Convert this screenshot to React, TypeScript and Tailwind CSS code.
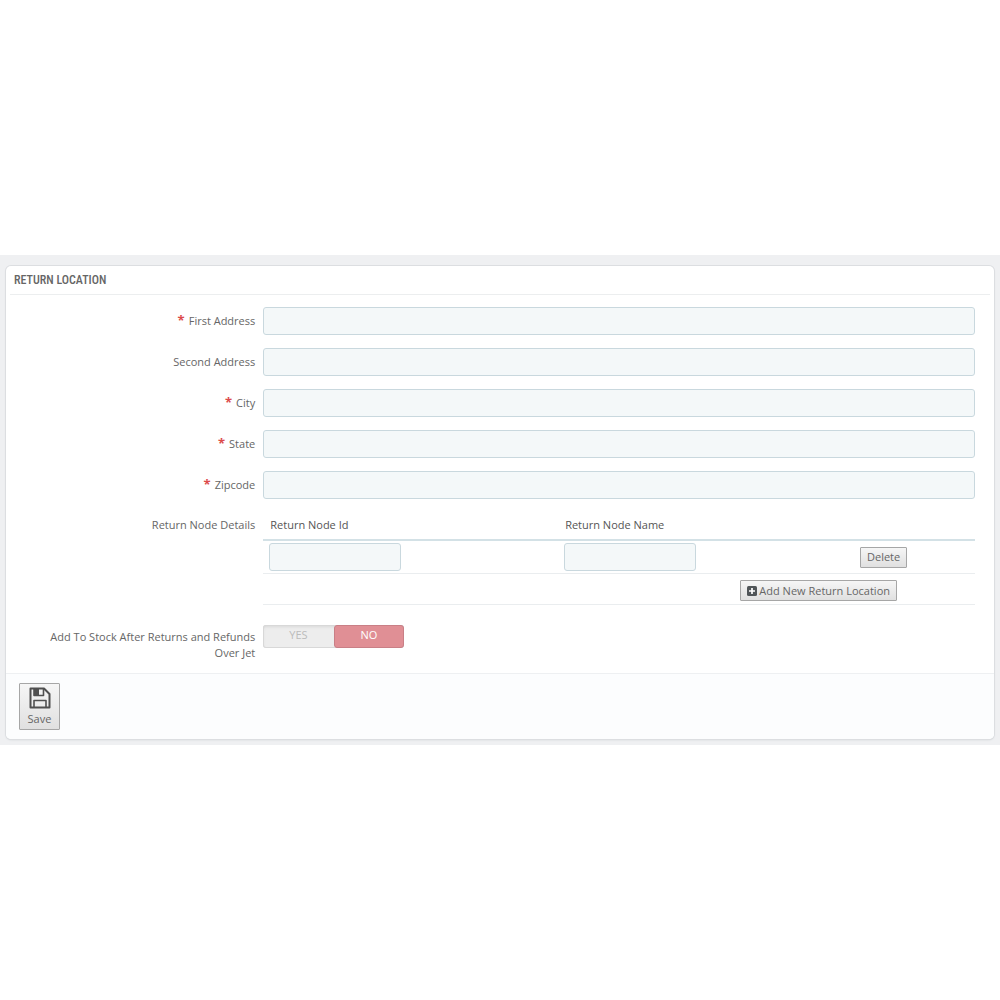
import { useState, type ReactNode } from 'react';

interface AddressField {
  id: string;
  label: string;
  required: boolean;
}

const ADDRESS_FIELDS: AddressField[] = [
  { id: 'first-address', label: 'First Address', required: true },
  { id: 'second-address', label: 'Second Address', required: false },
  { id: 'city', label: 'City', required: true },
  { id: 'state', label: 'State', required: true },
  { id: 'zipcode', label: 'Zipcode', required: true },
];

const inputClasses =
  'h-7 rounded-[3px] border border-[#c9d8de] bg-[#f4f8f9] px-2 text-xs text-[#555] outline-none focus:border-[#66afe9]';

const buttonClasses =
  'rounded-[1px] border border-[#a6a6a6] bg-linear-to-b from-[#f6f6f6] to-[#e0e0e0] text-[11px] text-[#666] hover:to-[#d4d4d4]';

const rowClasses = 'grid grid-cols-[1fr_3fr] gap-2';

const SaveIcon = () => (
  <svg viewBox="0 0 22 22" className="h-[22px] w-[22px]" fill="none" stroke="#4f4f4f" strokeWidth="2" strokeLinejoin="round">
    <path d="M1.5 1.5h13.5l5.5 5.5v13.5h-19z" />
    <path d="M5 1.5v7h9.5v-7" strokeWidth="1.6" />
    <path d="M5 2h5v6h-5z" fill="#4f4f4f" stroke="none" />
    <path d="M5 20.5v-7h12v7" strokeWidth="1.6" />
  </svg>
);

const PlusSquareIcon = () => (
  <svg viewBox="0 0 10 10" className="h-[10px] w-[10px]">
    <rect width="10" height="10" rx="1.5" fill="#505558" />
    <path d="M5 2v6M2 5h6" stroke="#fff" strokeWidth="1.7" />
  </svg>
);

const TextRow = ({ field }: { field: AddressField }) => (
  <div className={rowClasses}>
    <label htmlFor={field.id} className="pt-0.5 text-right leading-6">
      {field.required && <span className="mr-1 text-[13px] leading-none font-bold text-[#dc4b4b]">*</span>}
      {field.label}
    </label>
    <input id={field.id} type="text" required={field.required} className={`${inputClasses} w-full`} />
  </div>
);

const NodeTable = () => (
  <table className="w-full table-fixed border-collapse">
    <thead>
      <tr className="h-7 border-b-2 border-[#d3e1e6] text-left text-[#555]">
        <th className="px-[7px] pb-0.5 font-normal">Return Node Id</th>
        <th className="px-[7px] pb-0.5 font-normal">Return Node Name</th>
        <th className="w-[122px]" />
      </tr>
    </thead>
    <tbody>
      <tr className="h-[33px] border-b border-[#eaedef]">
        <td className="px-1.5">
          <input type="text" aria-label="Return Node Id" className={`${inputClasses} block w-[132px]`} />
        </td>
        <td className="px-1.5">
          <input type="text" aria-label="Return Node Name" className={`${inputClasses} block w-[132px]`} />
        </td>
        <td className="px-[7px]">
          <button type="button" className={`${buttonClasses} block h-[21px] px-1.5`}>
            Delete
          </button>
        </td>
      </tr>
      <tr className="h-[31px] border-b border-[#eaedef]">
        <td colSpan={3} className="pt-1 pr-[78px]">
          <button type="button" className={`${buttonClasses} ml-auto flex h-[21px] items-center gap-0.5 px-1.5`}>
            <PlusSquareIcon />
            Add New Return Location
          </button>
        </td>
      </tr>
    </tbody>
  </table>
);

interface SwitchOptionProps {
  checked: boolean;
  onSelect: () => void;
  activeClass: string;
  children: ReactNode;
}

const SwitchOption = ({ checked, onSelect, activeClass, children }: SwitchOptionProps) => (
  <label
    className={`flex flex-1 cursor-pointer items-center justify-center rounded-[3px] border pb-0.5 ${
      checked ? `${activeClass} text-white` : 'border-transparent text-[#bbb]'
    }`}
  >
    <input type="radio" name="add-to-stock" checked={checked} onChange={onSelect} className="sr-only" />
    {children}
  </label>
);

const StockSwitch = () => {
  const [enabled, setEnabled] = useState(false);

  return (
    <div
      role="radiogroup"
      aria-labelledby="stock-label"
      className="relative flex h-[23px] w-[141px] rounded-[3px] bg-[#ededed] shadow-[inset_0_0_0_1px_#d8d8d8,inset_0_2px_3px_#d8d8d8]"
    >
      <SwitchOption checked={enabled} onSelect={() => setEnabled(true)} activeClass="border-[#7fb98a] bg-[#92d097]">
        YES
      </SwitchOption>
      <SwitchOption checked={!enabled} onSelect={() => setEnabled(false)} activeClass="border-[#c97f86] bg-[#e08f95]">
        NO
      </SwitchOption>
    </div>
  );
};

export default function App() {
  return (
    <div className="flex min-h-screen flex-col justify-center bg-white font-['Open_Sans',sans-serif] text-[11px] text-[#666]">
      <main className="bg-[#eff0f2] px-1.5 pt-[11px] pb-1.5">
        <form
          onSubmit={(e) => e.preventDefault()}
          className="overflow-hidden rounded-[5px] bg-white shadow-[0_0_0_1px_#dcdee1,0_1px_2px_#cfd2d6]"
        >
          <h2 className="mx-1 border-b border-[#eceeef] px-1 font-['Ubuntu_Condensed','Roboto_Condensed','Liberation_Sans_Narrow',sans-serif] text-xs leading-7 font-medium text-[#666]">
            RETURN LOCATION
          </h2>

          <div className="flex flex-col gap-[13px] pt-3 pr-[19px] pb-3 pl-3">
            {ADDRESS_FIELDS.map((field) => (
              <TextRow key={field.id} field={field} />
            ))}

            <div className={rowClasses}>
              <span className="text-right leading-[26px]">Return Node Details</span>
              <NodeTable />
            </div>

            <div className={`${rowClasses} pt-[7px]`}>
              <span id="stock-label" className="pt-1 pl-4 text-right leading-4">
                Add To Stock After Returns and Refunds Over Jet
              </span>
              <StockSwitch />
            </div>
          </div>

          <div className="border-t border-[#eef0f2] bg-[#fcfdfe] px-[13px] py-[9px]">
            <button type="submit" className={`${buttonClasses} flex h-[47px] w-[41px] flex-col items-center gap-0.5 pt-[3px]`}>
              <SaveIcon />
              Save
            </button>
          </div>
        </form>
      </main>
    </div>
  );
}
